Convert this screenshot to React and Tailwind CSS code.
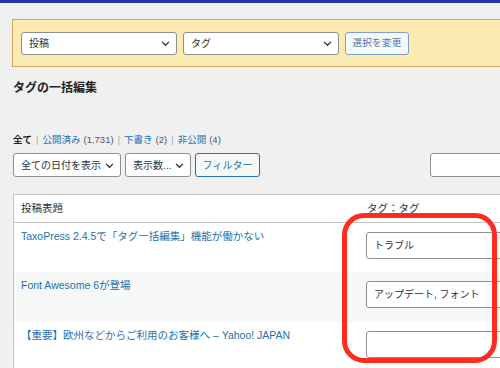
import React from 'react';

const font = { fontFamily: '"Liberation Sans", "Noto Sans CJK JP", sans-serif' };

const Chevron = () => (
  <svg width="9" height="9" viewBox="0 0 10 10" className="shrink-0">
    <path d="M1.2 3.2 L5 7 L8.8 3.2" fill="none" stroke="#2c3338" strokeWidth="1.5" />
  </svg>
);

const Select = ({ label, className }) => (
  <div className={`h-[23px] bg-white border border-[#8c8f94] rounded-[3px] flex items-center justify-between pl-[7px] pr-[6px] text-[10px] text-[#2c3338] whitespace-nowrap ${className}`}>
    <span>{label}</span>
    <Chevron />
  </div>
);

const rows = [
  { title: 'TaxoPress 2.4.5で「タグ一括編集」機能が働かない', tags: 'トラブル', bg: 'bg-white', h: 'h-[49px]' },
  { title: 'Font Awesome 6が登場', tags: 'アップデート, フォント', bg: 'bg-[#f6f7f7]', h: 'h-[50px]' },
  { title: '【重要】欧州などからご利用のお客様へ – Yahoo! JAPAN', tags: '', bg: 'bg-white', h: 'h-[50px]' },
];

export default function App() {
  return (
    <div className="relative w-[500px] h-[368px] overflow-hidden bg-[#f0f0f1] text-[#1d2327]" style={font}>
      <div className="h-[3px] bg-[#1d35a6]" />

      {/* notice */}
      <div className="mt-[16px] ml-[12px] w-[520px] h-[48px] bg-[#fcebb0] border border-[#c9a960] flex items-center gap-[6px] pl-[8px]">
        <Select label="投稿" className="w-[156px]" />
        <Select label="タグ" className="w-[156px]" />
        <div className="h-[23px] w-[64px] flex items-center justify-center bg-[#f6f7f7] border border-[#7f9fcb] rounded-[3px] text-[9.5px] tracking-[0.3px] text-[#4a78b3]">選択を変更</div>
      </div>

      <div className="ml-[13px] mt-[13px] text-[12px] font-semibold leading-[16px]">タグの一括編集</div>

      <div className="ml-[13px] mt-[37px] text-[9.5px] leading-[14px] flex items-center text-[#50575e] whitespace-nowrap">
        <span className="font-bold text-[#1d2327]">全て</span>
        <span className="mx-[4px] text-[#a7aaad]">|</span>
        <span className="text-[#2271b1]">公開済み</span><span className="ml-[3px]">(1,731)</span>
        <span className="mx-[4px] text-[#a7aaad]">|</span>
        <span className="text-[#2271b1]">下書き</span><span className="ml-[3px]">(2)</span>
        <span className="mx-[4px] text-[#a7aaad]">|</span>
        <span className="text-[#2271b1]">非公開</span><span className="ml-[3px]">(4)</span>
      </div>

      <div className="ml-[13px] mt-[6px] flex items-center h-[24px]">
        <Select label="全ての日付を表示" className="w-[108px] h-[24px]" />
        <Select label="表示数..." className="w-[66px] h-[24px] ml-[4px]" />
        <div className="ml-[4px] h-[24px] w-[65px] flex items-center justify-center bg-[#f6f7f7] border border-[#2271b1] rounded-[3px] text-[10px] text-[#2271b1]">フィルター</div>
        <div className="ml-auto h-[24px] w-[80px] mr-[-10px] bg-white border border-[#8c8f94] rounded-[3px]" />
      </div>

      {/* table */}
      <div className="ml-[13px] mt-[17px] w-[530px] bg-white border border-[#c3c4c7] text-[10.5px]">
        <div className="h-[28px] flex items-center border-b border-[#c3c4c7] text-[#2c3338]">
          <div className="w-[344px] pl-[7px]">投稿表題</div>
          <div className="pl-[9px]">タグ：タグ</div>
        </div>
        {rows.map((r, i) => (
          <div key={i} className={`flex ${r.bg} ${r.h}`}>
            <div className="w-[344px] pl-[7px] pt-[6px] text-[#2271b1] leading-[14px] whitespace-nowrap">{r.title}</div>
            <div className="pl-[8px] pt-[9px]">
              <div className="h-[27px] w-[170px] bg-white border border-[#8c8f94] rounded-[3px] flex items-center px-[7px] text-[10px] text-[#2c3338] whitespace-nowrap">{r.tags}</div>
            </div>
          </div>
        ))}
      </div>

      {/* red annotation */}
      <div className="absolute left-[342px] top-[213px] w-[155px] h-[150px] border-[5px] border-[#ff2b1f] rounded-[22px]" />
    </div>
  );
}
